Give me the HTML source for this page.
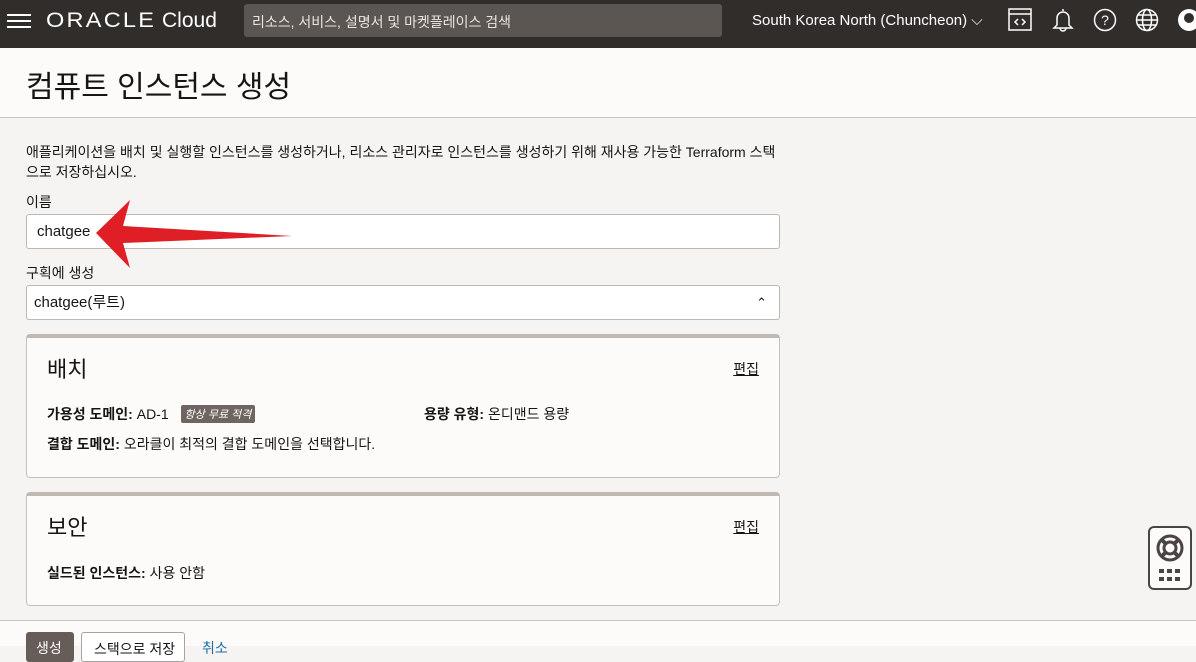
<!DOCTYPE html>
<html><head><meta charset="utf-8"><style>
*{box-sizing:border-box;margin:0;padding:0}
body{width:1196px;height:646px;overflow:hidden;background:#f5f4f2;font-family:"Liberation Sans","Noto Sans CJK KR",sans-serif;color:#161513;position:relative}
.top{position:absolute;left:0;top:0;width:1196px;height:48px;background:#312d2a;color:#fff}
.abs{position:absolute}
.title{position:absolute;top:48px;left:0;width:1196px;height:70px;background:#fcfbfa;border-bottom:1px solid #c9c5c0}
.inp{position:absolute;left:26px;width:754px;height:35px;background:#fff;border:1px solid #bdb8b2;border-radius:3px;font-size:15px;padding-left:10px;line-height:33px}
.card{position:absolute;left:26px;width:754px;background:#fcfbfa;border:1px solid #c4c0bb;border-top:4px solid #bfb9b2;border-radius:4px}
.card h2{position:absolute;left:20px;font-weight:normal;font-size:22px}
.edit{position:absolute;right:20px;font-size:14px;text-decoration:underline}
.t{position:absolute;font-size:14px}
b{font-weight:bold}
</style></head><body>
<div class="top">
<div class="abs" style="left:7px;top:14px;width:24px;height:2px;background:#fff;box-shadow:0 6px 0 #fff,0 12px 0 #fff"></div>
<div class="abs" style="left:46px;top:9px;font-size:21px;letter-spacing:2px;transform:scaleX(1.12);transform-origin:left">ORACLE</div>
<div class="abs" style="left:162px;top:9px;font-size:21px">Cloud</div>
<div class="abs" style="left:244px;top:4px;width:478px;height:33px;background:#5b5652;border-radius:3px;font-size:14px;color:#e9e5e1;padding:8px 0 0 8px">리소스, 서비스, 설명서 및 마켓플레이스 검색</div>
<div class="abs" style="left:752px;top:12px;font-size:15px">South Korea North (Chuncheon) ⌵</div>
<svg class="abs" style="left:1008px;top:8px" width="24" height="24" fill="none" stroke="#fff" stroke-width="1.5"><rect x="1" y="1" width="22" height="21"/><line x1="1" y1="6" x2="23" y2="6"/><path d="M10 11l-3 3 3 3M14 11l3 3-3 3"/></svg>
<svg class="abs" style="left:1051px;top:7px" width="24" height="26" fill="none" stroke="#fff" stroke-width="1.5"><path d="M12 2v2M6 18V11a6 6 0 0112 0v7l3 3H3z M9 21a3 3 0 006 0"/></svg>
<svg class="abs" style="left:1093px;top:8px" width="24" height="24" fill="none" stroke="#fff" stroke-width="1.5"><circle cx="12" cy="12" r="10.5"/><text x="12" y="17" font-size="14" fill="#fff" stroke="none" text-anchor="middle" font-family="Liberation Sans">?</text></svg>
<svg class="abs" style="left:1135px;top:8px" width="24" height="24" fill="none" stroke="#fff" stroke-width="1.5"><circle cx="12" cy="12" r="10.5"/><ellipse cx="12" cy="12" rx="4.5" ry="10.5"/><path d="M1.5 12h21M3 7h18M3 17h18"/></svg>
<div class="abs" style="left:1178px;top:9px;width:22px;height:22px;border-radius:50%;background:#fff"><div class="abs" style="left:6px;top:4px;width:10px;height:10px;border-radius:50%;background:#312d2a"></div></div>
</div>
<div class="title"><div class="abs" style="left:26px;top:14px;font-size:30px">컴퓨트 인스턴스 생성</div></div>
<div class="t" style="left:26px;top:142px;line-height:20px;width:760px">애플리케이션을 배치 및 실행할 인스턴스를 생성하거나, 리소스 관리자로 인스턴스를 생성하기 위해 재사용 가능한 Terraform 스택으로 저장하십시오.</div>
<div class="t" style="left:26px;top:192px">이름</div>
<div class="inp" style="top:214px">chatgee</div>
<div class="t" style="left:26px;top:263px">구획에 생성</div>
<div class="inp" style="top:285px;padding-left:7px">chatgee(루트)<span style="position:absolute;right:12px;top:0;font-size:13px">⌃</span></div>
<div class="card" style="top:334px;height:144px">
<h2 style="top:14px">배치</h2><div class="edit" style="top:21px">편집</div>
<div class="t" style="left:20px;top:66px"><b>가용성 도메인:</b> AD-1 <span style="display:inline-block;margin-left:8px;background:#6f6560;color:#fff;font-size:11px;font-style:italic;padding:1px 4px;border-radius:2px;vertical-align:1px">항상 무료 적격</span></div>
<div class="t" style="left:397px;top:66px"><b>용량 유형:</b> 온디맨드 용량</div>
<div class="t" style="left:20px;top:96px"><b>결합 도메인:</b> 오라클이 최적의 결합 도메인을 선택합니다.</div>
</div>
<div class="card" style="top:492px;height:114px">
<h2 style="top:14px">보안</h2><div class="edit" style="top:21px">편집</div>
<div class="t" style="left:20px;top:67px"><b>실드된 인스턴스:</b> 사용 안함</div>
</div>
<div class="abs" style="left:0;top:620px;width:1196px;height:26px;background:#fcfbfa;border-top:1px solid #c9c5c0"></div>
<div class="abs" style="left:26px;top:632px;width:48px;height:30px;background:#665c58;border-radius:3px;color:#fff;font-size:14px;padding:6px 0 0 10px">생성</div>
<div class="abs" style="left:81px;top:632px;width:104px;height:30px;background:#fff;border:1px solid #a9a39d;border-radius:3px;font-size:14px;padding:6px 0 0 12px">스택으로 저장</div>
<div class="abs" style="left:202px;top:638px;font-size:14px;color:#1b6ea8">취소</div>
<svg class="abs" style="left:90px;top:196px" width="210" height="76"><path d="M6 37L40 4L33 30L202 40L33 47L40 72Z" fill="#e01e26"/></svg>
<div class="abs" style="left:1148px;top:526px;width:44px;height:64px;border:2px solid #4a4542;border-radius:6px;background:#fcfbfa">
<svg class="abs" style="left:5px;top:5px" width="30" height="30" fill="none" stroke="#4a4542" stroke-width="3"><circle cx="15" cy="15" r="12"/><circle cx="15" cy="15" r="6"/><path d="M7 7l4 4M23 7l-4 4M7 23l4-4M23 23l-4-4" stroke-width="4"/></svg>
<div class="abs" style="left:9px;top:41px;width:5px;height:4px;background:#4a4542;box-shadow:8px 0 #4a4542,16px 0 #4a4542,0 8px #4a4542,8px 8px #4a4542,16px 8px #4a4542"></div>
</div>
</body></html>
